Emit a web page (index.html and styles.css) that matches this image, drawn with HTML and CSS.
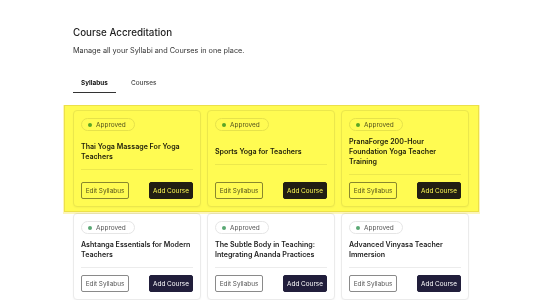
FILE: index.html
```html
<!DOCTYPE html>
<html>
<head>
<link rel="stylesheet" href="styles.css">
</head>
<body>
  <div class="page">
    <h1 class="title">Course Accreditation</h1>
    <p class="subtitle">Manage all your Syllabi and Courses in one place.</p>

    <div class="tabs">
      <div class="tab active">Syllabus</div>
      <div class="tab">Courses</div>
    </div>

    <div class="grid">
      <div class="highlight"></div>

      <div class="card">
        <span class="badge"><i class="dot"></i>Approved</span>
        <div class="card-body">
          <div class="card-title">Thai Yoga Massage For Yoga Teachers</div>
          <div class="divider"></div>
        </div>
        <div class="card-actions">
          <button class="btn btn-outline">Edit Syllabus</button>
          <button class="btn btn-dark">Add Course</button>
        </div>
      </div>

      <div class="card">
        <span class="badge"><i class="dot"></i>Approved</span>
        <div class="card-body">
          <div class="card-title">Sports Yoga for Teachers</div>
          <div class="divider"></div>
        </div>
        <div class="card-actions">
          <button class="btn btn-outline">Edit Syllabus</button>
          <button class="btn btn-dark">Add Course</button>
        </div>
      </div>

      <div class="card">
        <span class="badge"><i class="dot"></i>Approved</span>
        <div class="card-body">
          <div class="card-title">PranaForge 200-Hour Foundation Yoga Teacher Training</div>
          <div class="divider"></div>
        </div>
        <div class="card-actions">
          <button class="btn btn-outline">Edit Syllabus</button>
          <button class="btn btn-dark">Add Course</button>
        </div>
      </div>

      <div class="card">
        <span class="badge"><i class="dot"></i>Approved</span>
        <div class="card-body">
          <div class="card-title">Ashtanga Essentials for Modern Teachers</div>
          <div class="divider"></div>
        </div>
        <div class="card-actions">
          <button class="btn btn-outline">Edit Syllabus</button>
          <button class="btn btn-dark">Add Course</button>
        </div>
      </div>

      <div class="card">
        <span class="badge"><i class="dot"></i>Approved</span>
        <div class="card-body">
          <div class="card-title">The Subtle Body in Teaching: Integrating Ananda Practices</div>
          <div class="divider"></div>
        </div>
        <div class="card-actions">
          <button class="btn btn-outline">Edit Syllabus</button>
          <button class="btn btn-dark">Add Course</button>
        </div>
      </div>

      <div class="card">
        <span class="badge"><i class="dot"></i>Approved</span>
        <div class="card-body">
          <div class="card-title">Advanced Vinyasa Teacher Immersion</div>
          <div class="divider"></div>
        </div>
        <div class="card-actions">
          <button class="btn btn-outline">Edit Syllabus</button>
          <button class="btn btn-dark">Add Course</button>
        </div>
      </div>
    </div>
  </div>
</body>
</html>
```

FILE: styles.css
```css
html, body {
  margin: 0;
  background: #ffffff;
  font-family: Inter, "Open Sans", sans-serif;
  color: #222222;
}

.page {
  width: 396px;
  padding: 26px 0 0 73px;
}

.title {
  margin: 0;
  font-size: 9.8px;
  font-weight: 500;
  line-height: 14px;
}

.subtitle {
  margin: 6px 0 0;
  font-size: 7.3px;
  line-height: 9px;
  color: #333333;
}

.tabs {
  display: flex;
  margin-top: 24px;
}

.tab {
  font-size: 6.4px;
  font-weight: 500;
  line-height: 9px;
  color: #444444;
  padding: 0 0 4px;
  width: 58px;
}

.tab.active {
  font-weight: 700;
  color: #111111;
  width: 43px;
  padding-left: 8px;
  box-sizing: border-box;
  border-bottom: 1.5px solid #333333;
  margin-right: 15px;
}

.grid {
  position: relative;
  display: grid;
  grid-template-columns: repeat(3, 128px);
  gap: 6px 6px;
  margin-top: 17px;
}

.highlight {
  position: absolute;
  top: -5px;
  left: -9px;
  width: 413px;
  height: 105px;
  background: #fffb52;
  border: 1px solid #ece04a;
  box-shadow: 0 1px 0 1px rgba(250, 235, 120, 0.5);
  mix-blend-mode: multiply;
  z-index: 2;
  pointer-events: none;
}

.card {
  display: flex;
  flex-direction: column;
  border: 1px solid #ebebeb;
  border-radius: 4px;
  padding: 7px 7px 7px;
  background: #ffffff;
  box-shadow: 0 1px 2px rgba(0, 0, 0, 0.04);
}

.badge {
  align-self: flex-start;
  display: inline-flex;
  align-items: center;
  height: 11px;
  padding: 0 8px 0 6px;
  border: 1px solid #e6e6e6;
  border-radius: 7px;
  font-size: 6.5px;
  color: #555555;
}

.dot {
  width: 4px;
  height: 4px;
  border-radius: 50%;
  background: #5aa874;
  margin-right: 4px;
}

.card-body {
  flex: 1;
  display: flex;
  flex-direction: column;
  justify-content: center;
  padding-top: 6px;
}

.card-title {
  font-size: 7.1px;
  font-weight: 600;
  line-height: 10px;
  color: #1d1d1d;
}

.divider {
  height: 1px;
  background: #ececec;
  margin-top: 7px;
}

.card-actions {
  display: flex;
  justify-content: space-between;
  margin-top: 7px;
}

.btn {
  height: 17px;
  border-radius: 2px;
  font-family: inherit;
  font-size: 6.4px;
  padding: 0 2px;
  cursor: pointer;
}

.btn-outline {
  width: 48px;
  background: #ffffff;
  border: 1px solid #8a8a8a;
  color: #555555;
}

.btn-dark {
  width: 44px;
  background: #211e3b;
  border: 1px solid #211e3b;
  color: #ffffff;
}
```
